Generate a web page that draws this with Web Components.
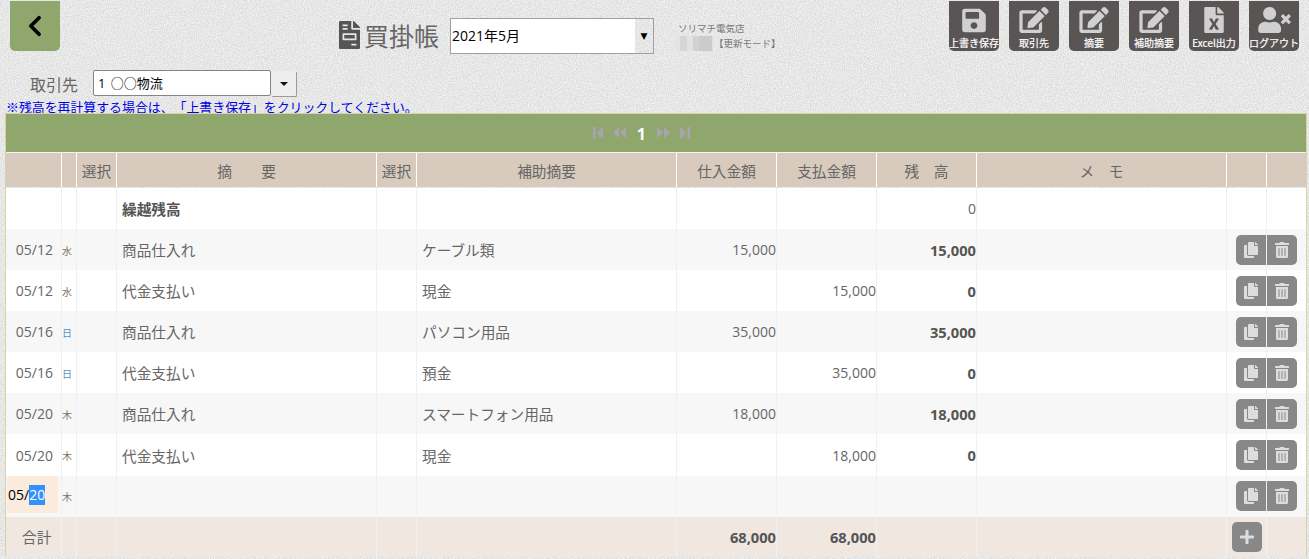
<!DOCTYPE html>
<html lang="ja">
<head>
<meta charset="utf-8">
<title>買掛帳</title>
<style>
html,body{margin:0;padding:0;height:100%;}
body{font-family:"Open Sans","Noto Sans CJK JP",sans-serif;color:#666;overflow:hidden;}
</style>
</head>
<body>
<x-app>
  <x-page-header>
    <x-back-button slot="back"></x-back-button>
    <x-page-title slot="title">買掛帳</x-page-title>
    <x-month-select slot="month" value="2021年5月"></x-month-select>
    <x-store-info slot="store" name="ソリマチ電気店" mode="【更新モード】"></x-store-info>
    <x-tool-button slot="tools" icon="save" label="上書き保存"></x-tool-button>
    <x-tool-button slot="tools" icon="edit" label="取引先"></x-tool-button>
    <x-tool-button slot="tools" icon="edit" label="摘要"></x-tool-button>
    <x-tool-button slot="tools" icon="edit" label="補助摘要"></x-tool-button>
    <x-tool-button slot="tools" icon="excel" label="Excel出力"></x-tool-button>
    <x-tool-button slot="tools" icon="logout" label="ログアウト"></x-tool-button>
  </x-page-header>
  <x-filter-bar label="取引先" value="1 ○○物流"></x-filter-bar>
  <x-note>※残高を再計算する場合は、「上書き保存」をクリックしてください。</x-note>
  <x-ledger>
    <x-pager></x-pager>
    <x-ledger-row kind="head" cells="|,|,選択,摘　　要,選択,補助摘要,仕入金額,支払金額,残　高,メ　モ,|,|"></x-ledger-row>
    <x-ledger-row kind="carry" summary="繰越残高" balance="0"></x-ledger-row>
    <x-ledger-row alt date="05/12" day="水" summary="商品仕入れ" sub="ケーブル類" buy="15,000" balance="15,000" actions></x-ledger-row>
    <x-ledger-row date="05/12" day="水" summary="代金支払い" sub="現金" pay="15,000" balance="0" actions></x-ledger-row>
    <x-ledger-row alt date="05/16" day="日" sun summary="商品仕入れ" sub="パソコン用品" buy="35,000" balance="35,000" actions></x-ledger-row>
    <x-ledger-row date="05/16" day="日" sun summary="代金支払い" sub="預金" pay="35,000" balance="0" actions></x-ledger-row>
    <x-ledger-row alt date="05/20" day="木" summary="商品仕入れ" sub="スマートフォン用品" buy="18,000" balance="18,000" actions></x-ledger-row>
    <x-ledger-row date="05/20" day="木" summary="代金支払い" sub="現金" pay="18,000" balance="0" actions></x-ledger-row>
    <x-ledger-row alt editing date="05/" selected="20" day="木" actions></x-ledger-row>
    <x-ledger-row kind="total" date="合計" buy="68,000" pay="68,000"></x-ledger-row>
  </x-ledger>
</x-app>
<script>
const ICONS = {
  save:{vb:"0 0 448 512",d:"M433.941 129.941l-83.882-83.882A48 48 0 0 0 316.118 32H48C21.49 32 0 53.49 0 80v352c0 26.51 21.49 48 48 48h352c26.51 0 48-21.49 48-48V163.882a48 48 0 0 0-14.059-33.941zM224 416c-35.346 0-64-28.654-64-64 0-35.346 28.654-64 64-64s64 28.654 64 64c0 35.346-28.654 64-64 64zm96-304.52V212c0 6.627-5.373 12-12 12H76c-6.627 0-12-5.373-12-12V108c0-6.627 5.373-12 12-12h228.52c3.183 0 6.235 1.264 8.485 3.515l3.48 3.48A11.996 11.996 0 0 1 320 111.48z",w:24,h:27},
  edit:{vb:"0 0 576 512",d:"M402.6 83.2l90.2 90.2c3.8 3.8 3.8 10 0 13.8L274.4 405.6l-92.8 10.3c-12.4 1.4-22.9-9.1-21.5-21.5l10.3-92.8L388.8 83.2c3.8-3.8 10-3.8 13.8 0zm162-22.9l-48.8-48.8c-15.2-15.2-39.9-15.2-55.2 0l-35.4 35.4c-3.8 3.8-3.8 10 0 13.8l90.2 90.2c3.8 3.8 10 3.8 13.8 0l35.4-35.4c15.2-15.3 15.2-40 0-55.2zM384 346.2V448H64V128h229.8c3.2 0 6.2-1.3 8.5-3.5l40-40c7.6-7.6 2.2-20.5-8.5-20.5H48C21.5 64 0 85.5 0 112v352c0 26.5 21.5 48 48 48h352c26.5 0 48-21.5 48-48V306.2c0-10.7-12.9-16-20.5-8.5l-40 40c-2.2 2.3-3.5 5.3-3.5 8.5z",w:30,h:26},
  excel:{vb:"0 0 384 512",d:"M224 136V0H24C10.7 0 0 10.7 0 24v464c0 13.3 10.7 24 24 24h336c13.3 0 24-10.7 24-24V160H248c-13.2 0-24-10.8-24-24zm60.1 106.5L224 336l60.1 93.5c5.1 8-.6 18.5-10.1 18.5h-34.9c-4.4 0-8.5-2.4-10.6-6.3C208.9 405.5 192 373 192 373c-6.4 14.8-10 20-36.6 68.8-2.1 3.9-6.1 6.3-10.5 6.3H110c-9.5 0-15.2-10.5-10.1-18.5l60.3-93.5-60.3-93.5c-5.2-8 .6-18.5 10.1-18.5h34.8c4.4 0 8.5 2.4 10.6 6.3 26.1 48.8 20 33.6 36.6 68.5 0 0 6.1-11.7 36.6-68.5 2.1-3.9 6.2-6.3 10.6-6.3H274c9.5-.1 15.2 10.4 10.1 18.4zM384 121.9v6.1H256V0h6.1c6.4 0 12.5 2.5 17 7l97.9 98c4.5 4.5 7 10.6 7 16.9z",w:20,h:26},
  logout:{vb:"0 0 640 512",d:"M589.6 240l45.6-45.6c6.3-6.3 6.3-16.5 0-22.8l-22.8-22.8c-6.3-6.3-16.5-6.3-22.8 0L544 194.4l-45.6-45.6c-6.3-6.3-16.5-6.3-22.8 0l-22.8 22.8c-6.3 6.3-6.3 16.5 0 22.8l45.6 45.6-45.6 45.6c-6.3 6.3-6.3 16.5 0 22.8l22.8 22.8c6.3 6.3 16.5 6.3 22.8 0l45.6-45.6 45.6 45.6c6.3 6.3 16.5 6.3 22.8 0l22.8-22.8c6.3-6.3 6.3-16.5 0-22.8L589.6 240zM224 256c70.7 0 128-57.3 128-128S294.7 0 224 0 96 57.3 96 128s57.3 128 128 128zm89.6 32h-16.7c-22.2 10.2-46.9 16-72.9 16s-50.6-5.8-72.9-16h-16.7C60.2 288 0 348.2 0 422.4V464c0 26.5 21.5 48 48 48h352c26.5 0 48-21.5 48-48v-41.6c0-74.2-60.2-134.4-134.4-134.4z",w:33,h:26},
  copy:{vb:"0 0 448 512",d:"M320 448v40c0 13.255-10.745 24-24 24H24c-13.255 0-24-10.745-24-24V120c0-13.255 10.745-24 24-24h72v296c0 30.879 25.121 56 56 56h168zm0-344V0H152c-13.255 0-24 10.745-24 24v368c0 13.255 10.745 24 24 24h272c13.255 0 24-10.745 24-24V128H344c-13.2 0-24-10.8-24-24zm120.971-31.029L375.029 7.029A24 24 0 0 0 358.059 0H352v96h96v-6.059a24 24 0 0 0-7.029-16.97z",w:14,h:16},
  trash:{vb:"0 0 448 512",d:"M32 464a48 48 0 0 0 48 48h288a48 48 0 0 0 48-48V128H32zm272-256a16 16 0 0 1 32 0v224a16 16 0 0 1-32 0zm-96 0a16 16 0 0 1 32 0v224a16 16 0 0 1-32 0zm-96 0a16 16 0 0 1 32 0v224a16 16 0 0 1-32 0zM432 32H312l-9.4-18.7A24 24 0 0 0 281.1 0H166.8a23.72 23.72 0 0 0-21.4 13.3L136 32H16A16 16 0 0 0 0 48v32a16 16 0 0 0 16 16h416a16 16 0 0 0 16-16V48a16 16 0 0 0-16-16z",w:14,h:16},
  plus:{vb:"0 0 448 512",d:"M416 208H272V64c0-17.67-14.33-32-32-32h-32c-17.67 0-32 14.33-32 32v144H32c-17.67 0-32 14.33-32 32v32c0 17.67 14.33 32 32 32h144v144c0 17.67 14.33 32 32 32h32c17.67 0 32-14.33 32-32V304h144c17.67 0 32-14.33 32-32v-32c0-17.67-14.33-32-32-32z",w:14,h:16}
};
const svgIcon = (n)=>{const i=ICONS[n];return `<svg viewBox="${i.vb}" width="${i.w}" height="${i.h}" fill="currentColor" aria-hidden="true"><path d="${i.d}"/></svg>`;};

class Base extends HTMLElement{
  render(html){ if(!this.shadowRoot) this.attachShadow({mode:"open"}); this.shadowRoot.innerHTML = html; }
}
const attr=(el,n,d="")=>el.hasAttribute(n)?el.getAttribute(n):d;

customElements.define("x-app", class extends Base{ connectedCallback(){ this.render(`<style>
  :host{display:block;position:relative;width:1309px;height:559px;overflow:hidden;padding-top:1px;box-sizing:border-box;background:#e6e6e6;text-spacing-trim:space-all;
    --cols:56px 15px 40px 260px 40px 260px 100px 100px 100px 250px 40px 39px;}
  svg.tex{position:absolute;left:0;top:0;width:100%;height:100%;z-index:0;}
  .c{position:relative;z-index:1;}
  </style>
  <svg class="tex" aria-hidden="true"><filter id="n" color-interpolation-filters="sRGB" x="0" y="0" width="100%" height="100%"><feTurbulence type="fractalNoise" baseFrequency="0.85" numOctaves="2" seed="4"/><feColorMatrix type="matrix" values="0.2 0 0 0 0.805  0.2 0 0 0 0.805  0.2 0 0 0 0.805  0 0 0 0 1"/></filter><rect width="100%" height="100%" filter="url(#n)"/></svg>
  <div class="c"><slot></slot></div>`);}});

customElements.define("x-page-header", class extends Base{ connectedCallback(){ this.render(`<style>
  :host{display:flex;align-items:flex-start;height:50px;padding:0 10px;}
  .tools{margin-left:auto;display:flex;gap:10px;}
  ::slotted([slot=title]){margin-left:279px;margin-top:18px;}
  ::slotted([slot=month]){margin-left:11px;margin-top:17px;}
  ::slotted([slot=store]){margin-left:21px;margin-top:20px;}
  </style><slot name="back"></slot><slot name="title"></slot><slot name="month"></slot><slot name="store"></slot><div class="tools"><slot name="tools"></slot></div>`);}});

customElements.define("x-back-button", class extends Base{ connectedCallback(){ this.render(`<style>
  :host{display:flex;align-items:center;justify-content:center;width:50px;height:50px;background:#8fa76c;border-radius:0 0 5px 5px;}
  svg{display:block;margin-top:-1px;margin-left:-1px;}
  </style><svg viewBox="0 0 16 24" width="15" height="22" fill="none" stroke="#000" stroke-width="4" stroke-linecap="round" stroke-linejoin="round"><path d="M13 3 4 12l9 9"/></svg>`);}});

customElements.define("x-page-title", class extends Base{ connectedCallback(){ this.render(`<style>
  :host{display:flex;align-items:center;gap:4px;height:32px;color:#666;font:25px/32px "Noto Sans CJK JP",sans-serif;white-space:nowrap;}
  svg{display:block;flex:none;}
  </style><svg viewBox="0 0 384 512" width="21" height="28" aria-hidden="true"><path fill="#555" d="M288 256H96v64h192v-64zm89-151L279.1 7c-4.5-4.5-10.6-7-17-7H256v128h128v-6.1c0-6.3-2.5-12.4-7-16.9zm-153 31V0H24C10.7 0 0 10.7 0 24v464c0 13.3 10.7 24 24 24h336c13.3 0 24-10.7 24-24V160H248c-13.2 0-24-10.8-24-24zM64 72c0-4.400 3.600-8 8-8h80c4.400 0 8 3.600 8 8v16c0 4.400-3.600 8-8 8H72c-4.400 0-8-3.600-8-8V72zm0 64c0-4.400 3.600-8 8-8h80c4.400 0 8 3.600 8 8v16c0 4.400-3.600 8-8 8H72c-4.400 0-8-3.600-8-8v-16zm256 304c0 4.400-3.600 8-8 8h-80c-4.400 0-8-3.600-8-8v-16c0-4.400 3.600-8 8-8h80c4.400 0 8 3.600 8 8v16zm0-200v96c0 8.800-7.200 16-16 16H80c-8.800 0-16-7.200-16-16v-96c0-8.800 7.200-16 16-16h224c8.800 0 16 7.200 16 16z"/></svg><slot></slot>`);}});

customElements.define("x-month-select", class extends Base{ connectedCallback(){ this.render(`<style>
  :host{display:flex;width:204px;height:36px;box-sizing:border-box;border:1px solid #a0a0a0;font:14px "Open Sans","Noto Sans CJK JP",sans-serif;color:#000;}
  .v{flex:0 0 184px;background:#fff;display:flex;align-items:center;padding:0 0 2px 1px;box-sizing:border-box;}
  .a{flex:1;display:flex;align-items:center;justify-content:center;font-size:9px;font-family:"DejaVu Sans",sans-serif;}
  </style><div class="v">${attr(this,"value")}</div><div class="a">▼</div>`);}});

customElements.define("x-store-info", class extends Base{ connectedCallback(){ this.render(`<style>
  :host{display:block;font:9.5px/15px "Noto Sans CJK JP",sans-serif;color:#777;white-space:nowrap;}
  .n{padding-left:3px;height:15px;}
  .m{display:flex;align-items:center;}
  .blur{width:39px;height:15px;background:linear-gradient(90deg,#e4e4e4 0 12%,#d6d6d6 12% 30%,#e2e2e2 30% 45%,#d2d2d2 45% 62%,#cbcbcb 62% 95%,#e2e2e2 95%);}
  </style><div class="n">${attr(this,"name")}</div><div class="m"><div class="blur"></div>${attr(this,"mode")}</div>`);}});

customElements.define("x-tool-button", class extends Base{ connectedCallback(){ this.render(`<style>
  :host{display:flex;flex-direction:column;align-items:center;width:50px;height:50px;background:#5a5555;border-radius:0 0 5px 5px;color:#d0d0d0;overflow:visible;}
  .i{height:26px;margin-top:6px;display:flex;align-items:center;justify-content:center;}
  svg{display:block;}
  .l{margin-top:3px;font:10px/13px "Noto Sans CJK JP",sans-serif;color:#fff;white-space:nowrap;-webkit-text-stroke:.2px #fff;}
  </style><div class="i">${svgIcon(attr(this,"icon"))}</div><div class="l">${attr(this,"label")}</div>`);}});

customElements.define("x-filter-bar", class extends Base{ connectedCallback(){ this.render(`<style>
  :host{display:flex;align-items:flex-start;height:27px;margin-top:19px;padding-left:30px;font:16px/28px "Noto Sans CJK JP",sans-serif;color:#666;}
  .lbl{width:63px;}
  .in{width:178px;height:26px;box-sizing:border-box;border:1px solid #858585;border-radius:2px;background:#fff;color:#000;font:13px/24px "Open Sans","Noto Sans CJK JP",sans-serif;padding-left:4px;white-space:pre;word-spacing:2px;}
  .btn{width:25px;height:25px;margin:1px 0 0 0;box-sizing:border-box;background:#eee;border-radius:1px;box-shadow:1px 1px 0 #9a9a9a;display:flex;align-items:center;justify-content:center;}
  .btn i{display:block;width:0;height:0;border:4px solid transparent;border-top:4px solid #111;border-bottom:0;}
  </style><div class="lbl">${attr(this,"label")}</div><div class="in">${attr(this,"value")}</div><div class="btn"><i></i></div>`);}});

customElements.define("x-note", class extends Base{ connectedCallback(){ this.render(`<style>
  :host{display:block;height:16px;padding-left:6px;box-sizing:border-box;font:12.9px/20px "Noto Sans CJK JP",sans-serif;color:#0000e6;white-space:nowrap;overflow:visible;}
  </style><slot></slot>`);}});

customElements.define("x-ledger", class extends Base{ connectedCallback(){ this.render(`<style>
  :host{display:block;position:relative;width:1302px;margin-left:5px;box-sizing:border-box;border:1px solid #d8d3a0;border-bottom:0;}
  </style><slot></slot>`);}});

customElements.define("x-pager", class extends Base{ connectedCallback(){ this.render(`<style>
  :host{display:flex;align-items:center;justify-content:center;height:38px;background:#8fa76c;color:#a9a4b2;border-bottom:1px solid #f4f4f4;}
  svg{display:block;margin-top:-1px;}
  .n{color:#fff;font:bold 16px/20px "Open Sans",sans-serif;margin:2px 11px 0 10.5px;}
  .row{display:flex;align-items:center;margin-left:-29px;}
  </style><div class="row">
  <svg viewBox="0 0 10 12" width="10" height="12" fill="currentColor"><rect x="0" y="0" width="2.500" height="12"/><path d="M10 0v12L3.500 6z"/></svg>
  <svg viewBox="0 0 13 11" width="13" height="11" fill="currentColor" style="margin-left:10px"><path d="M6 0v11L0 5.500zM13 0v11L7 5.500z"/></svg>
  <div class="n">1</div>
  <svg viewBox="0 0 13 11" width="13" height="11" fill="currentColor"><path d="M0 0v11l6-5.500zM7 0v11l6-5.500z"/></svg>
  <svg viewBox="0 0 10 12" width="10" height="12" fill="currentColor" style="margin-left:10px"><path d="M0 0v12l6.500-6z"/><rect x="7.500" y="0" width="2.500" height="12"/></svg>
  </div>`);}});

customElements.define("x-ledger-row", class extends Base{ connectedCallback(){
  const kind=attr(this,"kind","body");
  const st=`<style>
  :host{display:grid;grid-template-columns:var(--cols);color:#666;font:14.67px "Noto Sans CJK JP",sans-serif;height:41.1px;background:#fff;}
  :host([kind=head]){height:34px;background:#d8cabd;margin-bottom:1px;}
  :host([kind=head]) .c{border-right:1px solid #fff;justify-content:center;}
  :host([kind=head]) .c:last-child{border-right:0;}
  :host([alt]){background:#f7f7f7;}
  :host([kind=total]){background:#efe7e0;height:40px;}
  :host([kind=carry]){height:41px;}
  .c{display:flex;align-items:center;min-width:0;box-sizing:border-box;border-right:1px solid #f0f0f0;white-space:nowrap;}
  .c:last-child{border-right:0;}
  .num{font-family:"Open Sans","Noto Sans CJK JP",sans-serif;font-size:14px;justify-content:flex-end;}
  .b{font-weight:700;font-size:14.67px;color:#555;}
  .date{font-family:"Open Sans","Noto Sans CJK JP",sans-serif;font-size:14px;justify-content:flex-end;padding-right:8px;}
  .day{font-size:10px;justify-content:flex-start;color:#84705e;padding-top:1px;}
  .day.sun{color:#5a90bd;}
  .tx{padding-left:5px;}
  .total-label{font-size:14.67px;font-family:"Noto Sans CJK JP",sans-serif;justify-content:flex-start;padding-left:16px;padding-right:0;}
  .edit{font-family:"Open Sans","Noto Sans CJK JP",sans-serif;font-size:14px;align-items:center;justify-content:flex-start;}
  .field{display:flex;align-items:center;width:51px;height:37px;margin:-3px 0 0 1px;padding-left:1px;box-sizing:border-box;background:#faebdd;border-radius:2px;color:#000;}
  .sel{background:#3390ff;color:#fff;line-height:20px;}
  .btn{width:30px;height:30px;background:#888;color:#ddd;display:flex;align-items:center;justify-content:center;box-sizing:border-box;}
  .r{justify-content:flex-end;}
  .copy{border-radius:5px 0 0 5px;}
  .trash{border-radius:0 5px 5px 0;}
  .plus{border-radius:5px;margin-left:5px;}
  svg{display:block;}
  </style>`;
  let cells;
  if(kind==="head"){
    cells=attr(this,"cells").split(",").map(t=>`<div class="c">${t==="|"?"":t}</div>`).join("");
  }else if(kind==="total"){
    cells=`<div class="c total-label">${attr(this,"date")}</div><div class="c"></div><div class="c"></div><div class="c"></div><div class="c"></div><div class="c"></div>
    <div class="c num b">${attr(this,"buy")}</div><div class="c num b">${attr(this,"pay")}</div><div class="c"></div><div class="c"></div>
    <div class="c"><div class="btn plus">${svgIcon("plus")}</div></div><div class="c"></div>`;
  }else{
    const date=this.hasAttribute("editing")
      ?`<div class="c edit"><div class="field">${attr(this,"date")}<span class="sel">${attr(this,"selected")}</span></div></div>`
      :`<div class="c date">${attr(this,"date")}</div>`;
    const carry=kind==="carry";
    const bal=attr(this,"balance");
    const acts=this.hasAttribute("actions");
    cells=`${date}<div class="c day${this.hasAttribute("sun")?" sun":""}">${attr(this,"day")}</div><div class="c"></div>
    <div class="c tx${carry?" b":""}">${attr(this,"summary")}</div><div class="c"></div><div class="c tx">${attr(this,"sub")}</div>
    <div class="c num">${attr(this,"buy")}</div><div class="c num">${attr(this,"pay")}</div>
    <div class="c num${carry?"":" b"}">${bal}</div><div class="c"></div>
    <div class="c r">${acts?`<div class="btn copy">${svgIcon("copy")}</div>`:""}</div>
    <div class="c">${acts?`<div class="btn trash">${svgIcon("trash")}</div>`:""}</div>`;
  }
  this.render(st+cells);
}});
</script>
</body>
</html>
